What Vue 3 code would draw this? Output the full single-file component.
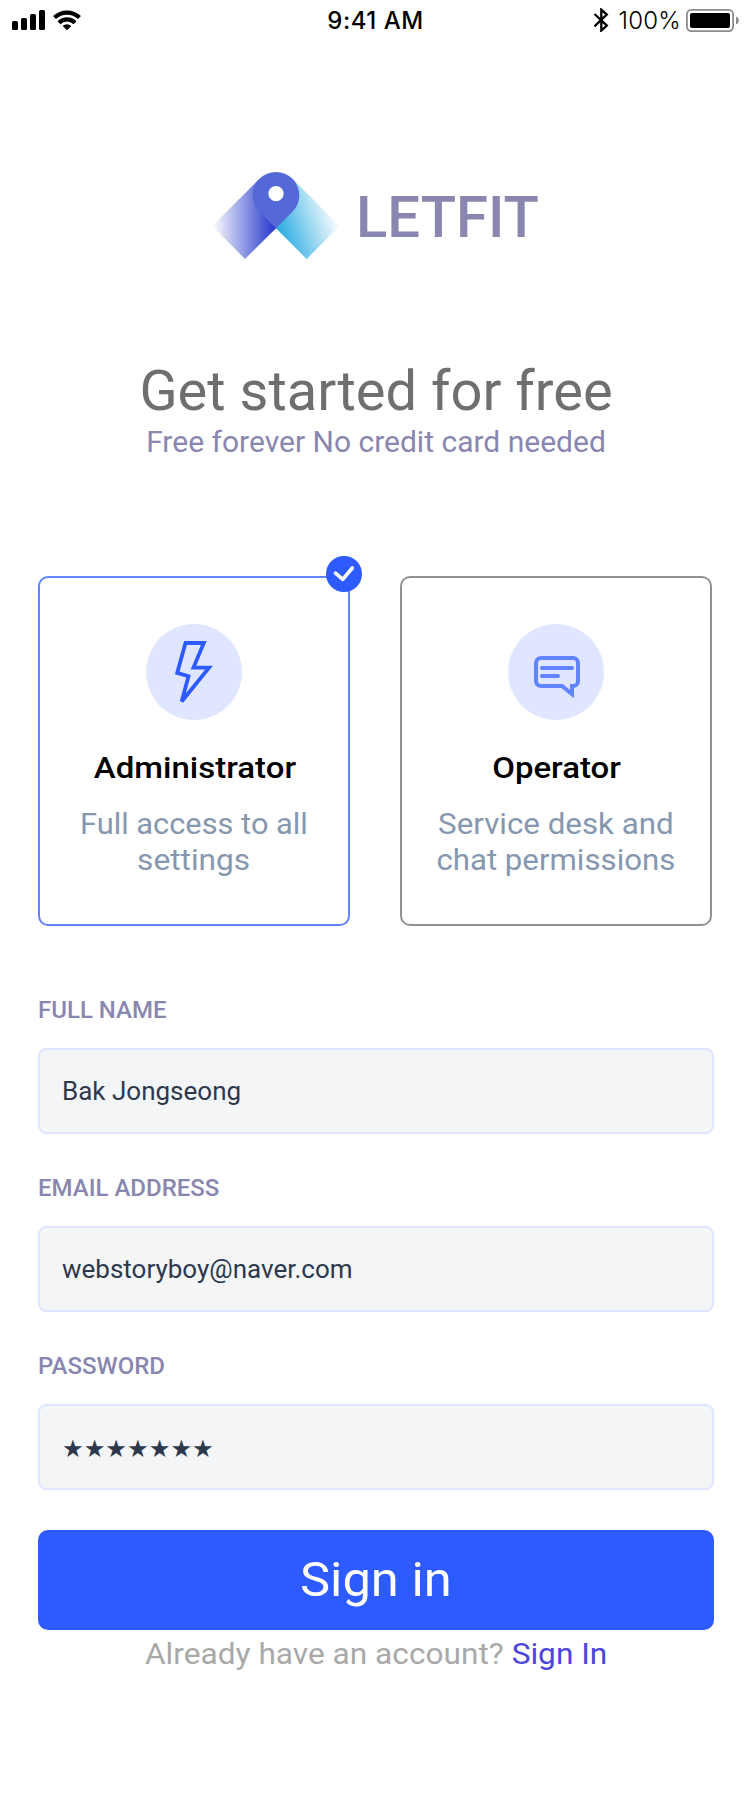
<script setup>
const roles = [
  {
    id: 'admin',
    title: 'Administrator',
    lines: [{ text: 'Full access to all', stretch: 1.027 }, { text: 'settings', stretch: 1.055 }],
    active: true,
  },
  {
    id: 'operator',
    title: 'Operator',
    lines: [{ text: 'Service desk and', stretch: 1.044 }, { text: 'chat permissions', stretch: 1.04 }],
    active: false,
  },
]
const fields = [
  { id: 'name', label: 'FULL NAME', value: 'Bak Jongseong' },
  { id: 'email', label: 'EMAIL ADDRESS', value: 'webstoryboy@naver.com' },
  { id: 'password', label: 'PASSWORD', value: '★★★★★★★' },
]
</script>

<template>
  <main class="screen">
    <header class="status">
      <div class="status-left">
        <svg width="72" height="22" viewBox="11 9 72 22">
          <rect x="12" y="21" width="6" height="9" rx="1.5" />
          <rect x="21" y="18" width="6" height="12" rx="1.5" />
          <rect x="30" y="14" width="6" height="16" rx="1.5" />
          <rect x="39" y="10" width="6" height="20" rx="1.5" />
          <path d="M54.500 17.600a18 18 0 0 1 25 0M59 22.700a11.400 11.400 0 0 1 16 0" fill="none" stroke="#000" stroke-width="4.200" />
          <path d="M67 30.200 62.700 26a6.200 6.200 0 0 1 8.600 0z" />
        </svg>
      </div>
      <div class="clock">9:41 AM</div>
      <div class="status-right">
        <svg width="16" height="24" viewBox="592 8 16 24">
          <path d="M593.500 14 605.800 25.600 600.300 30.600V9.600L605.800 14.600 593.500 26.400" fill="none" stroke="#000" stroke-width="2.300" />
        </svg>
        <span class="percent">100%</span>
        <svg class="battery" width="54" height="23" viewBox="686 9 54 23">
          <rect x="686.900" y="9.900" width="46.200" height="21.200" rx="4.500" fill="none" stroke="#8c8c8c" stroke-width="1.800" />
          <rect x="690" y="13" width="40" height="15" rx="2" />
          <path d="M736 16.500c3.800 1.400 3.800 6.600 0 8z" fill="#8c8c8c" />
        </svg>
      </div>
    </header>

    <section class="brand">
      <svg width="128" height="90" viewBox="212 171 128 90">
        <defs>
          <linearGradient id="wingLeft" gradientUnits="userSpaceOnUse" x1="212" y1="226" x2="275" y2="226">
            <stop offset="0" stop-color="#fff" />
            <stop offset="1" stop-color="#2437cb" />
          </linearGradient>
          <linearGradient id="wingRight" gradientUnits="userSpaceOnUse" x1="280" y1="234" x2="336" y2="214">
            <stop offset="0" stop-color="#2dade2" />
            <stop offset="1" stop-color="#fff" />
          </linearGradient>
        </defs>
        <path d="M259.500 178.800 212.300 226 245 259 276 228.200 290 200z" fill="url(#wingLeft)" />
        <path d="M292.500 178.800 339.700 226 306.700 259 276 228.200 270 200z" fill="url(#wingRight)" />
        <path d="M259.500 211.800a23.300 23.300 0 1 1 33 0L276 228.200z" fill="#5468d8" />
        <circle cx="276" cy="193.700" r="7.600" fill="#fff" />
      </svg>
      <span class="wordmark">LETFIT</span>
    </section>

    <section class="intro">
      <h1>Get started for free</h1>
      <p>Free forever No credit card needed</p>
    </section>

    <section class="roles">
      <article v-for="r in roles" :key="r.id" class="role" :class="{ active: r.active }">
        <span v-if="r.active" class="badge">
          <svg width="36" height="36" viewBox="0 0 36 36">
            <path d="M9.500 17.200 16.800 23.400 26.300 12" fill="none" stroke="#fff" stroke-width="3.600" stroke-linecap="round" stroke-linejoin="round" />
          </svg>
        </span>
        <div class="disc">
          <svg v-if="r.id === 'admin'" width="96" height="96" viewBox="0 0 96 96">
            <path d="M39.500 19H57.800L47.500 43.600H63L35.700 77.500 42.500 52.300 31.200 48.900z" fill="none" stroke="#2d5bff" stroke-width="3.800" />
          </svg>
          <svg v-else width="96" height="96" viewBox="0 0 96 96">
            <path d="M33 34H65a5 5 0 0 1 5 5V57a5 5 0 0 1-5 5H64V70L54 62H33a5 5 0 0 1-5-5V39a5 5 0 0 1 5-5z" fill="none" stroke="#6284ff" stroke-width="4" />
            <path d="M34 44H64M34 52H50" fill="none" stroke="#6284ff" stroke-width="4" stroke-linecap="round" />
          </svg>
        </div>
        <h2><span>{{ r.title }}</span></h2>
        <p v-for="line in r.lines" :key="line.text">
          <span :style="{ transform: `scaleX(${line.stretch})` }">{{ line.text }}</span>
        </p>
      </article>
    </section>

    <form class="form" @submit.prevent>
      <div v-for="f in fields" :key="f.id" class="field">
        <label>{{ f.label }}</label>
        <div class="input" :class="f.id">{{ f.value }}</div>
      </div>
      <button type="submit"><span>Sign in</span></button>
    </form>
    <p class="footer"><span>Already have an account? <a>Sign In</a></span></p>
  </main>
</template>

<style>
body { background: #fff; }
</style>

<style scoped>
.screen { width: 750px; height: 1802px; overflow: hidden; background: #fff; font-family: Roboto, "Liberation Sans", sans-serif; color: #000; }
svg { display: block; }
h1, h2, p { margin: 0; font-weight: 400; white-space: nowrap; }
.status { display: grid; grid-template-columns: 1fr auto 1fr; align-items: start; height: 40px; padding: 0 10px 0 11px; font-family: Inter, sans-serif; }
.status-left { padding-top: 9px; }
.clock { font-size: 24px; font-weight: 500; letter-spacing: 0.5px; line-height: 24px; padding-top: 9px; }
.status-right { display: flex; justify-content: flex-end; padding-top: 8px; }
.percent { font-size: 24px; font-weight: 350; letter-spacing: 0.2px; line-height: 24px; margin: 1px 5px 0 10px; }
.battery { margin-top: 1px; }
.brand { display: flex; margin: 131px 0 0 212px; height: 90px; }
.wordmark { margin-left: 16px; font-size: 58px; font-weight: 500; line-height: 92px; color: #8987af; }
.intro { text-align: center; padding: 98px 0 0 2px; height: 217px; }
.intro h1 { font-size: 56px; line-height: 64px; color: #6f6f6f; }
.intro p { font-size: 30px; line-height: 38px; color: #8987af; }
.roles { display: flex; gap: 50px; padding-left: 38px; }
.role { position: relative; box-sizing: border-box; width: 312px; height: 350px; border: 2px solid #919191; border-radius: 10px; padding-top: 46px; text-align: center; }
.role.active { border-color: #6284ff; }
.badge { position: absolute; top: -22px; right: -14px; border-radius: 50%; background: #2d5bff; }
.disc { width: 96px; height: 96px; margin: 0 auto; border-radius: 50%; background: #e0e6ff; }
h2 span, .role p span, .footer > span, button span { display: inline-block; }
.role h2 { font-size: 30px; font-weight: 500; line-height: 36px; margin: 30px 0 20px; padding-left: 2px; }
.role h2 span { transform: scaleX(1.1); }
.role p { font-size: 30px; line-height: 36px; color: #8698af; }
.form { width: 676px; margin: 64px 0 0 38px; }
.field { height: 178px; }
label { display: block; font-size: 24px; font-weight: 500; line-height: 40px; color: #8987af; }
.input { box-sizing: border-box; height: 86px; margin-top: 18px; border: 2px solid #e0e6ff; border-radius: 8px; padding-left: 22px; background: #f3f5f7; color: #2e384d; font-size: 26px; line-height: 82px; }
.password { font-family: "DejaVu Sans", sans-serif; font-size: 24.200px; line-height: 86px; }
button { display: block; width: 676px; height: 100px; margin-top: 6px; padding: 0; border: 0; border-radius: 10px; background: #2d5bff; color: #fff; font-family: inherit; font-size: 48px; line-height: 100px; }
button span { transform: scaleX(1.055); }
.footer { text-align: center; font-size: 30px; line-height: 36px; padding: 6px 0 0 2px; color: #a9a9a9; }
.footer > span { transform: scaleX(1.055); }
.footer a { color: #4b45e0; }
</style>
